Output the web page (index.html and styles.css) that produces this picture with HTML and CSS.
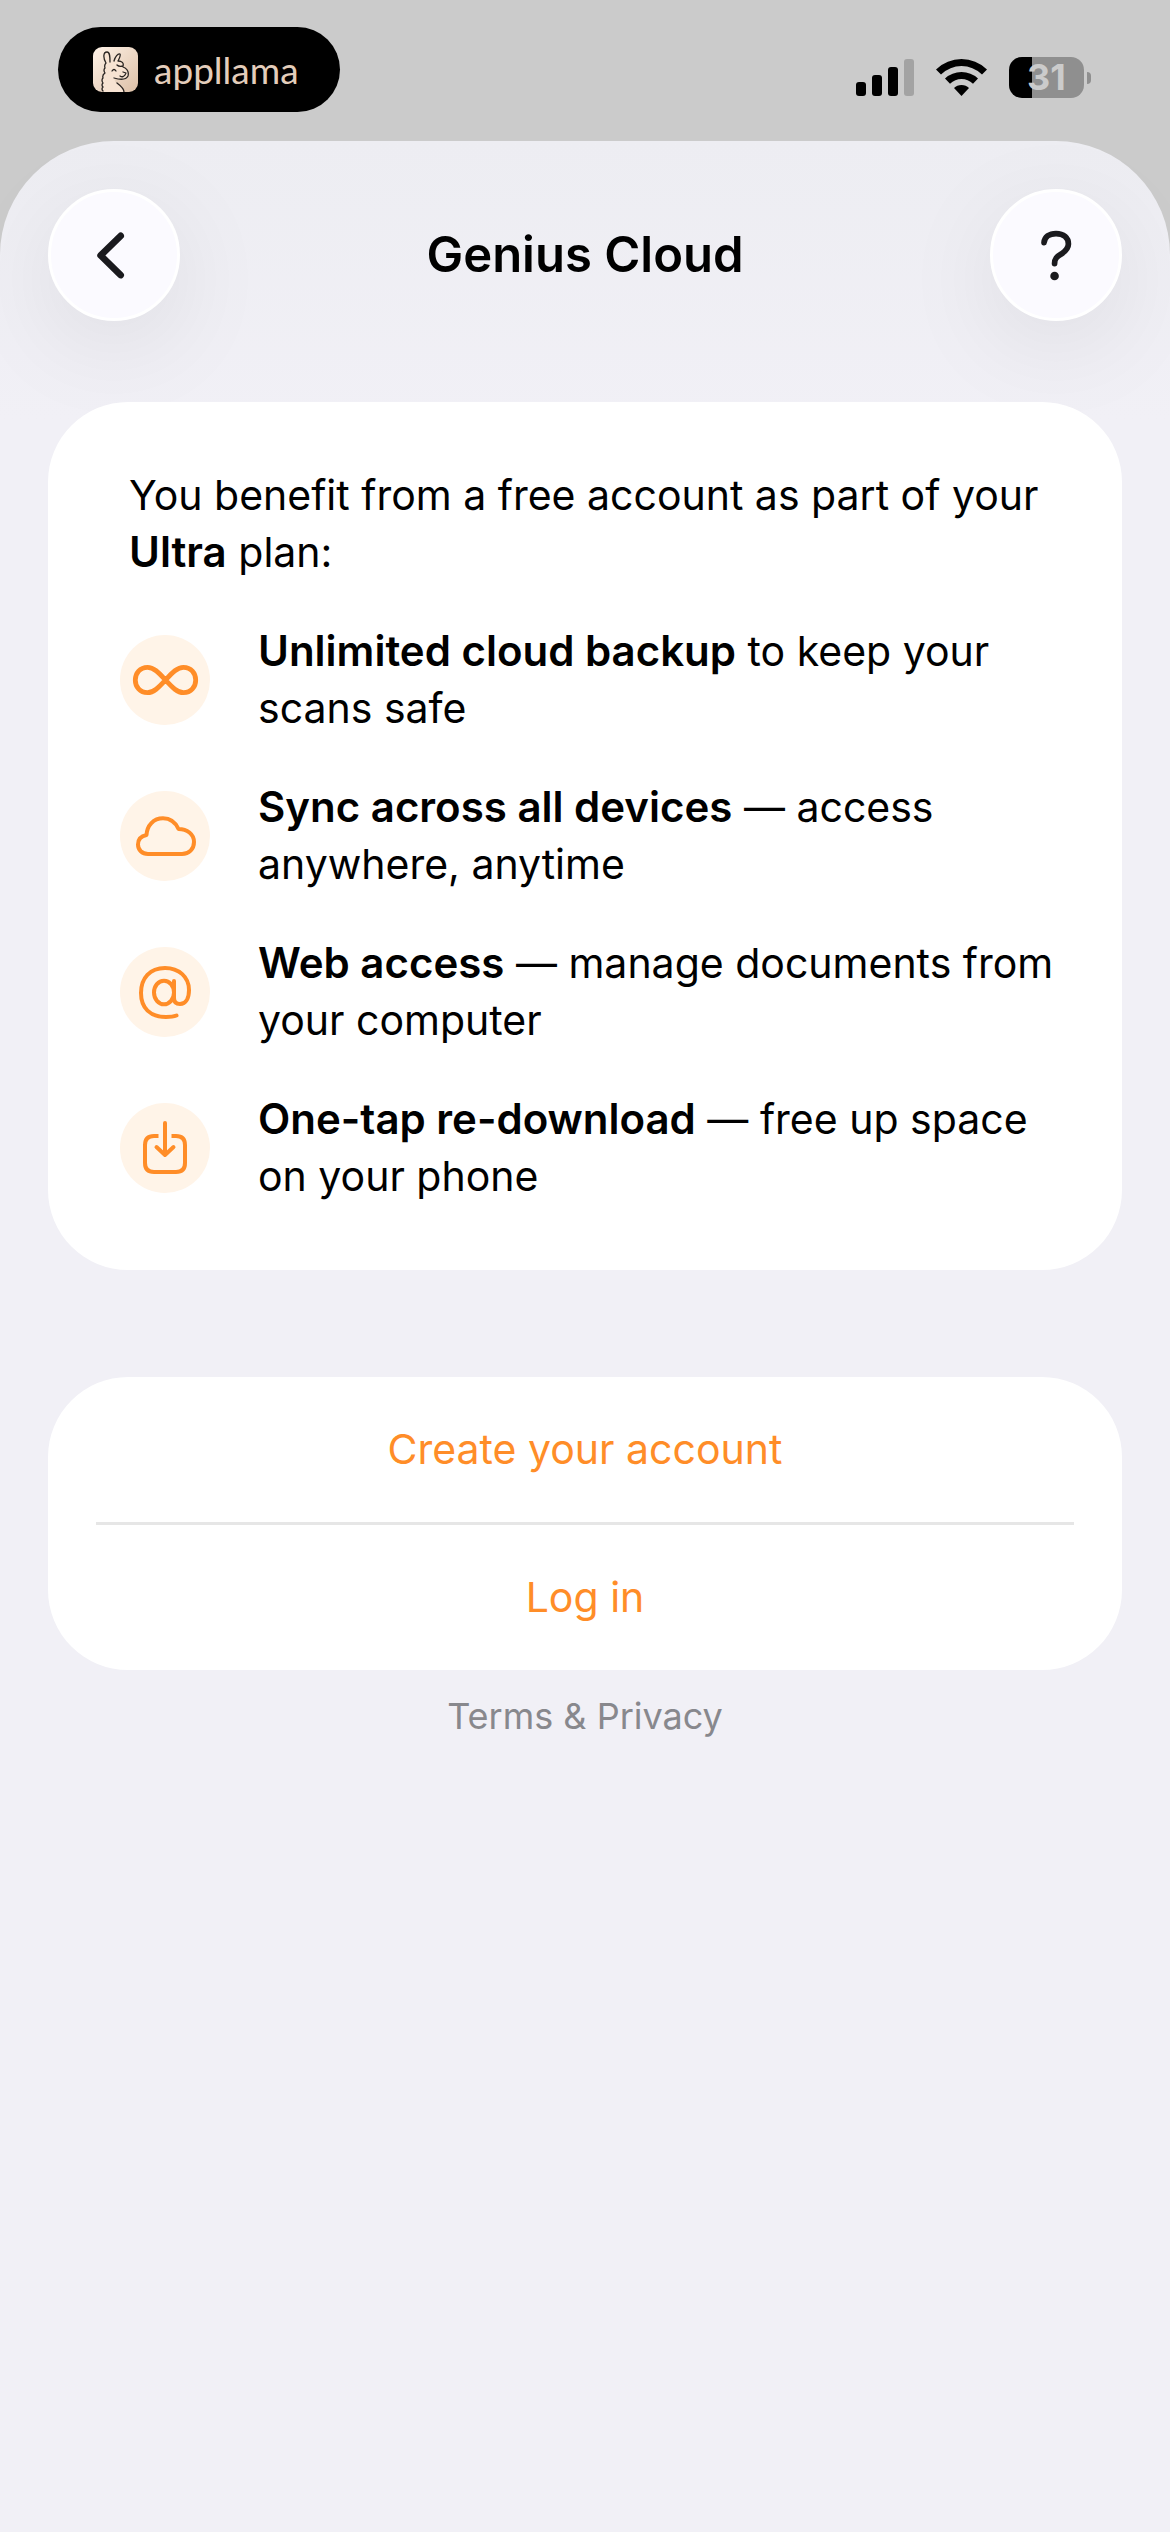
FILE: index.html
```html
<!DOCTYPE html>
<html lang="en">
<head>
  <meta charset="UTF-8" />
  <meta name="viewport" content="width=device-width, initial-scale=1" />
  <title>Genius Cloud</title>
  <link rel="stylesheet" href="styles.css">
</head>
<body>
  <div class="status-bar">
    <div class="pill">
      <svg class="llama" viewBox="0 0 45 45" aria-hidden="true">
        <defs>
          <linearGradient id="tile" x1="0" y1="0" x2="1" y2="1">
            <stop offset="0" stop-color="#fff3e8" />
            <stop offset="1" stop-color="#dcbfa6" />
          </linearGradient>
        </defs>
        <rect width="45" height="45" rx="9" fill="url(#tile)" />
        <path d="M10 45C8 36 10 29 12 25C12 21 11 18 13 16C10 11 10 5 14 5C17 5 17 10 17 15L21 14C22 10 25 6 27 7C28 9 26 12 25 14C29 14 30 17 29 20C34 22 36 25 35 29C33 33 28 33 24 32C21 31 21 34 24 37C28 40 31 42 31 45Z" fill="#f7e3d2" />
        <path d="M10 44Q8 42 10 40Q8 38 10 36Q8 33 10 31Q9 28 12 26Q10 23 12 21Q11 18 13 16C10 11 10 5 14 5C17 5 17 10 17 15M21 14C22 10 25 6 27 7C28 9 26 12 25 14M25 14C29 14 31 16 30 19Q26 20 24 18M30 20C35 22 36 25 35 29C33 33 28 33 21 31M19 24Q21 21 23 24M30 25L33 26L32 28M32 28Q30 31 27 29M24 36C28 39 31 42 31 45" fill="none" stroke="#2a2522" stroke-width="1.3" stroke-linecap="round" stroke-linejoin="round" />
      </svg>
      <span class="brand">appllama</span>
    </div>
    <div class="indicators">
      <svg class="signal" viewBox="0 0 58 38" aria-label="Signal">
        <rect y="23" width="10" height="14" rx="3" />
        <rect x="16" y="16" width="10" height="21" rx="3" />
        <rect x="32" y="8" width="10" height="29" rx="3" />
        <rect class="off" x="48" width="10" height="37" rx="3" />
      </svg>
      <svg class="wifi" viewBox="0 0 51 38" aria-label="Wi-Fi">
        <path d="M0 10.500Q11 0 25.500 0T51 10.500L46 15.500Q37 7 25.500 7T5 15.500Z" />
        <path d="M9 19.500Q16 13 25.500 13T42 19.500L37 24.800Q32 20 25.500 20T14 24.800Z" />
        <path d="M18 29Q21 26 25.500 26T33 29L25.500 37Z" />
      </svg>
      <div class="battery"><span class="level">31</span></div>
    </div>
  </div>

  <main class="sheet">
    <header class="nav">
      <button class="round" aria-label="Back">
        <svg viewBox="0 0 132 132"><path d="M73 46L52 66.500L73 87" stroke-width="7" /></svg>
      </button>
      <h1>Genius Cloud</h1>
      <button class="round" aria-label="Help">
        <svg viewBox="0 0 132 132">
          <path d="M53.500 53C54 47 59 43.500 66 43.500C74 43.500 79 48 79 54.500C79 59.500 76 62 71.500 65C66.500 68 64.500 70 64.500 75" stroke-width="6" />
          <circle cx="64.500" cy="88" r="4.500" />
        </svg>
      </button>
    </header>

    <section class="card benefits">
      <p>You benefit from a free account as part of your <b>Ultra</b> plan:</p>
      <ul>
        <li>
          <svg class="icon" viewBox="0 0 90 90"><path stroke-width="4.800" d="M45.500 45C39 38 34 32.300 27.500 32.300C20 32.300 15.300 38 15.300 45S20 57.700 27.500 57.700C34 57.700 39 52 45.500 45C52 38 57 32.300 63.500 32.300C71 32.300 75.700 38 75.700 45S71 57.700 63.500 57.700C57 57.700 52 52 45.500 45Z" /></svg>
          <span><b>Unlimited cloud backup</b> to keep your scans safe</span>
        </li>
        <li>
          <svg class="icon" viewBox="0 0 90 90"><path d="M28 63C22 63 18 59 18 53.500C18 48 21.500 45 26.500 44C27 34.500 33.500 27.300 43 27.300C50 27.300 55.500 31.500 58.500 38C67 38 74 43 74 51C74 58 69 63 62 63Z" /></svg>
          <span><b>Sync across all devices</b> — access anywhere, anytime</span>
        </li>
        <li>
          <svg class="icon" viewBox="0 0 90 90">
            <ellipse cx="44" cy="45.500" rx="10" ry="11.800" />
            <path d="M54 34V51C54 55 56 57 60 57C66 57 69 51 69 43C69 30 59 21 45 21C30 21 21 31 21 46C21 61 30 70 46 70C50 70 54 69.500 56.500 68.500" />
          </svg>
          <span><b>Web access</b> — manage documents from your computer</span>
        </li>
        <li>
          <svg class="icon" viewBox="0 0 90 90">
            <path stroke-linecap="butt" d="M38.500 33H34Q25 33 25 42V60Q25 69 34 69H56Q65 69 65 60V42Q65 33 56 33H51.500" />
            <path d="M45 20V52M36.500 44L45 52L53.500 44" />
          </svg>
          <span><b>One-tap re-download</b> — free up space on your phone</span>
        </li>
      </ul>
    </section>

    <section class="card actions">
      <button>Create your account</button>
      <hr>
      <button>Log in</button>
    </section>
    <a class="terms" href="#">Terms &amp; Privacy</a>
  </main>
</body>
</html>
```
FILE: styles.css
```css
* {box-sizing:border-box}
body {margin:0; min-height:100vh; display:flex; flex-direction:column; background:#cbcbcb; color:#000; font-family:Inter, sans-serif; font-size:41px; line-height:57px}
b {font-size:42px; font-weight:600; line-height:1}
button {border:0; padding:0; background:none; font:inherit; cursor:pointer}

.status-bar {display:flex; justify-content:space-between; align-items:flex-start; height:141px; padding:27px 79px 0 58px}
.pill {display:flex; align-items:center; gap:16px; height:85px; padding:0 41px 0 35px; border-radius:43px; background:#000}
.llama {width:45px; height:45px}
.brand {font-family:Lato, sans-serif; font-size:37px; line-height:40px; color:#e3cdbb}
.indicators {display:flex; align-items:center; gap:22px; padding-top:30px}
.signal {width:58px; height:38px}
.signal .off {fill:#a3a3a3}
.wifi {width:51px; height:38px}
.battery {display:flex; align-items:center; gap:3px}
.battery::after {content:""; width:4px; height:12px; border-radius:0 6px 6px 0; background:#8f8f8f}
.level {width:75px; height:41px; border-radius:13px; background:linear-gradient(to right, #000 31%, #8f8f8f 31%); color:#cbcbcb; font-size:36px; font-weight:700; line-height:41px; text-align:center}

.sheet {flex:1; display:flex; flex-direction:column; padding:48px; border-radius:114px 114px 0 0; background:linear-gradient(#ededf2, #f1f0f6 280px)}
.nav {display:flex; justify-content:space-between; align-items:center; margin-bottom:81px}
.nav h1 {margin:0; font-size:49px; font-weight:600; line-height:60px}
.round {width:132px; height:132px; border:3px solid #fff; border-radius:50%; background:#fbfaff; box-shadow:0 24px 100px rgba(0,0,0,.08)}
.round svg {display:block; width:100%; height:100%; fill:none; stroke:#1a1a1e; stroke-linecap:round; stroke-linejoin:round}
.round circle {fill:#1a1a1e; stroke:none}

.card {border-radius:80px; background:#fff}
.benefits {padding:65px 60px 65px 72px}
.benefits p {margin:0 0 42px; padding-left:9px}
.benefits ul {display:grid; gap:42px; margin:0; padding:0; list-style:none}
.benefits li {display:flex; align-items:center; gap:48px}
.icon {flex:none; width:90px; height:90px; border-radius:50%; background:#fff4e8; fill:none; stroke:#ff8d28; stroke-width:4; stroke-linecap:round; stroke-linejoin:round}

.actions {display:flex; flex-direction:column; margin-top:107px; padding:0 48px}
.actions button {height:145px; color:#ff8d28}
.actions hr {width:100%; height:3px; margin:0; border:0; background:#e6e6e6}
.terms {align-self:center; margin-top:18px; color:#88888d; font-size:36px; text-decoration:none}
```
